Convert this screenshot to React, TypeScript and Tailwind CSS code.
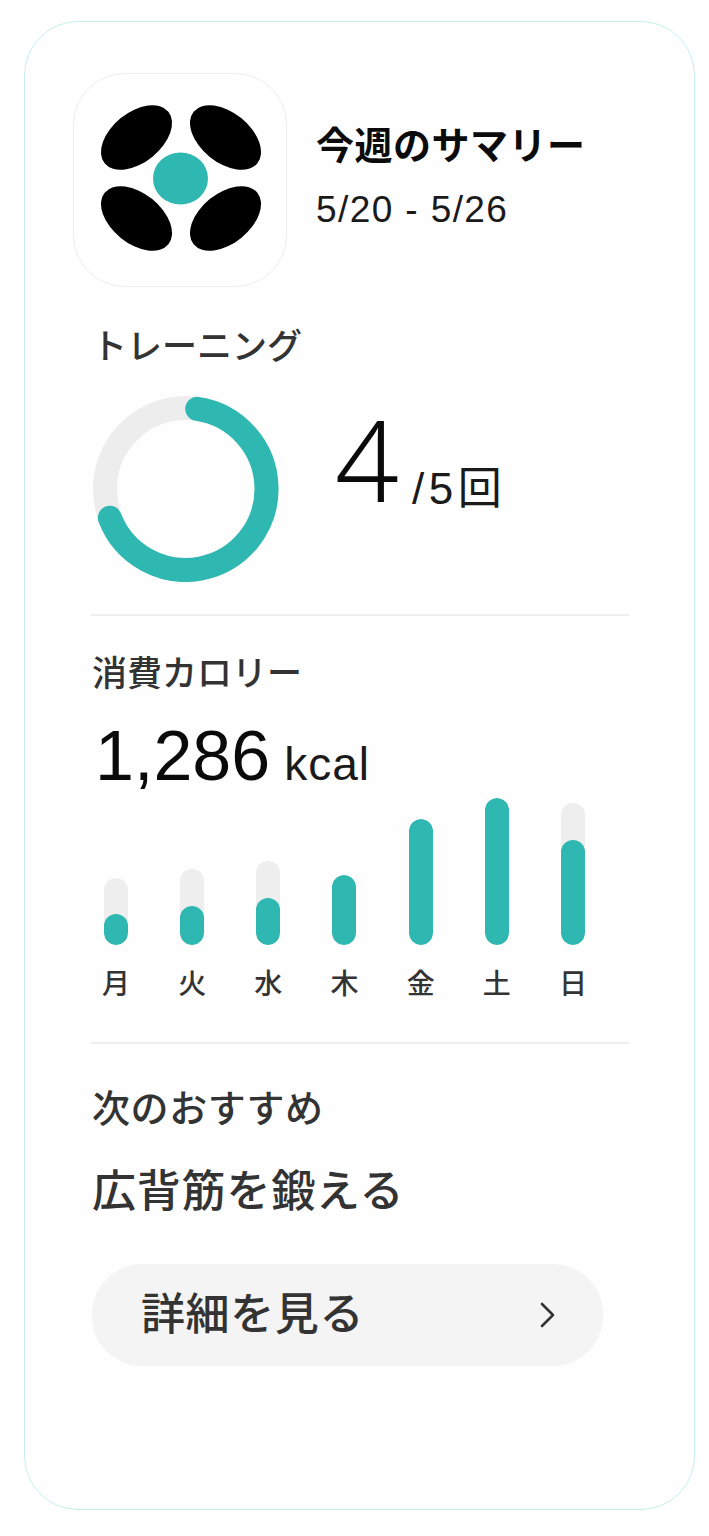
const TEAL = '#2EB8B1';

const bars = [
  { day: '月', track: 67, fill: 31 },
  { day: '火', track: 76, fill: 39 },
  { day: '水', track: 84, fill: 47 },
  { day: '木', track: 70, fill: 70 },
  { day: '金', track: 126, fill: 126 },
  { day: '土', track: 147, fill: 147 },
  { day: '日', track: 142, fill: 105 },
];

function Logo() {
  return (
    <svg width="212" height="212" viewBox="0 0 212 212" fill="none">
      <ellipse cx="62.5" cy="63.5" rx="41" ry="25" transform="rotate(-39 62.5 63.5)" fill="#000" />
      <ellipse cx="151.5" cy="63.5" rx="41" ry="25" transform="rotate(39 151.5 63.5)" fill="#000" />
      <ellipse cx="62.5" cy="144.5" rx="41" ry="25" transform="rotate(39 62.5 144.5)" fill="#000" />
      <ellipse cx="151.5" cy="144.5" rx="41" ry="25" transform="rotate(-39 151.5 144.5)" fill="#000" />
      <ellipse cx="106.5" cy="104.5" rx="27.5" ry="26" fill={TEAL} />
    </svg>
  );
}

function Ring() {
  return (
    <svg width="186" height="186" viewBox="0 0 186 186" fill="none">
      <circle cx="93" cy="93" r="81" stroke="#EDEDED" strokeWidth="24" />
      <path
        d="M104.2 12.8 A81 81 0 1 1 16.8 121.8"
        stroke={TEAL}
        strokeWidth="24"
        strokeLinecap="round"
      />
    </svg>
  );
}

export default function App() {
  return (
    <div
      className="h-[1536px] w-[709px] overflow-hidden bg-white pl-[24px] pt-[21px] text-[#111]"
      style={{ fontFamily: '"Liberation Sans", "Noto Sans CJK JP", sans-serif' }}
    >
      <div className="h-[1489px] w-[671px] rounded-[54px] border border-[#c4f0ec] bg-[#fefefe] pl-[48px] pt-[51px]">
        <div className="flex items-center">
          <div className="h-[214px] w-[214px] rounded-[52px] border border-[#eeeeee] bg-white">
            <Logo />
          </div>
          <div className="ml-[29px] mt-[-6px]">
            <div className="text-[38px] font-bold leading-[44px] tracking-[0.5px] text-[#0b0b0b]">今週のサマリー</div>
            <div className="mt-[22px] text-[37px] leading-[40px] tracking-[1.4px] text-[#1a1a1a]">5/20 - 5/26</div>
          </div>
        </div>

        <div className="ml-[18px] w-[538px]">
          <div className="ml-[1px] mt-[38px] text-[35px] font-medium leading-[44px] text-[#333]">トレーニング</div>
          <div className="ml-[2px] mt-[27px] flex items-center">
            <Ring />
            <div className="mb-[60px] ml-[56px] flex items-baseline">
              <span className="text-[112px] font-light leading-[120px] text-[#0a0a0a]" style={{ fontFamily: '"Noto Sans", sans-serif' }}>4</span>
              <span className="relative top-[2px] ml-[13px] text-[44px] leading-[50px] tracking-[4.5px] text-[#1a1a1a]">/5回</span>
            </div>
          </div>
          <div className="mt-[32px] h-[2px] bg-[#eeeeee]" />

          <div className="ml-[1px] mt-[36px] text-[35px] font-medium leading-[44px] text-[#333]">消費カロリー</div>
          <div className="ml-[4px] mt-[20px] flex items-baseline">
            <span className="text-[70px] leading-[80px] text-[#0a0a0a]">1,286</span>
            <span className="ml-[14px] text-[46px] leading-[50px] tracking-[1px] text-[#1a1a1a]">kcal</span>
          </div>

          <div className="ml-[13px] mt-[1px] flex h-[148px] w-[481px] items-end justify-between">
            {bars.map((b) => (
              <div
                key={b.day}
                className="flex w-[24px] items-end overflow-hidden rounded-full bg-[#EEEEEE]"
                style={{ height: b.track }}
              >
                <div className="w-full rounded-full bg-[#2EB8B1]" style={{ height: b.fill }} />
              </div>
            ))}
          </div>
          <div className="ml-[13px] mt-[19px] flex w-[481px] justify-between">
            {bars.map((b) => (
              <span key={b.day} className="flex w-[24px] justify-center whitespace-nowrap text-[28px] font-medium leading-[42px] text-[#333]">
                {b.day}
              </span>
            ))}
          </div>

          <div className="mt-[36px] h-[2px] bg-[#eeeeee]" />
          <div className="ml-[1px] mt-[43px] text-[38px] font-medium leading-[44px] tracking-[0.6px] text-[#333]">次のおすすめ</div>
          <div className="ml-[1px] mt-[33px] text-[44px] font-medium leading-[56px] tracking-[0.8px] text-[#333]">広背筋を鍛える</div>
          <div className="ml-[1px] mt-[44px] flex h-[102px] w-[511px] items-center justify-between rounded-[50px] bg-[#F4F4F4] pl-[49px] pr-[47px]">
            <span className="text-[44px] font-medium leading-[56px] tracking-[0.6px] text-[#333]">詳細を見る</span>
            <svg width="16" height="26" viewBox="0 0 16 26" fill="none">
              <path d="M2 2 L13 13 L2 24" stroke="#333" strokeWidth="2.6" strokeLinecap="round" strokeLinejoin="round" />
            </svg>
          </div>
        </div>
      </div>
    </div>
  );
}
